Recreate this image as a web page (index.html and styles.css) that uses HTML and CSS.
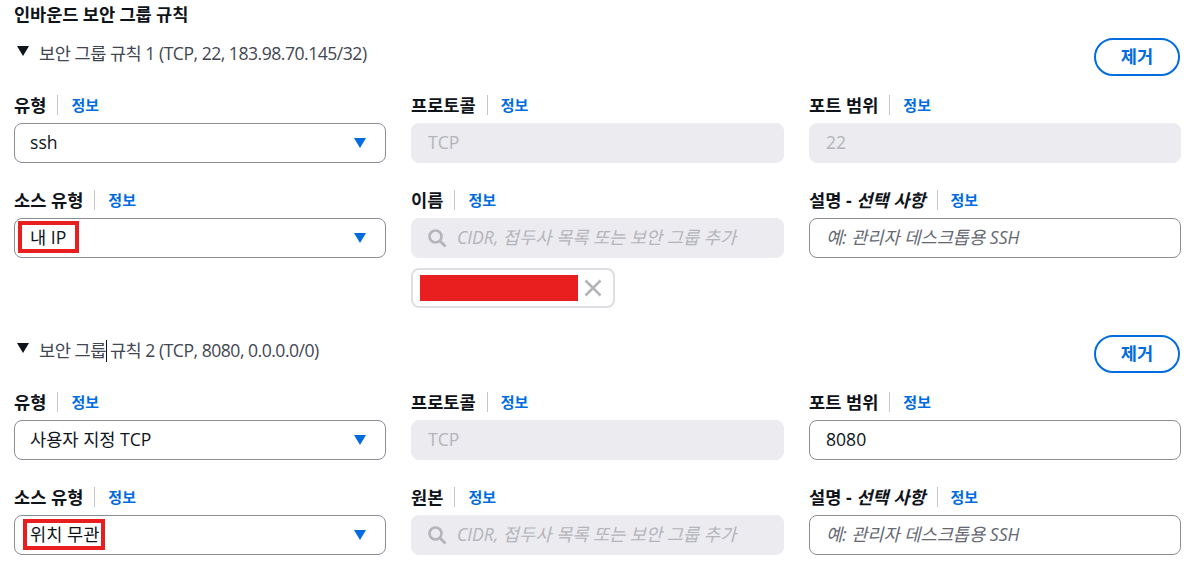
FILE: index.html
```html
<!DOCTYPE html>
<html lang="ko">
<head>
<meta charset="utf-8">
<title>인바운드 보안 그룹 규칙</title>
<link rel="stylesheet" href="styles.css">
</head>
<body>
<h2 class="title">인바운드 보안 그룹 규칙</h2>

<section class="rule rule-first">
  <div class="rule-head">
    <div class="rule-name"><span class="tri"></span><span>보안 그룹 규칙 1 (TCP, 22, 183.98.70.145/32)</span></div>
    <button class="remove">제거</button>
  </div>
  <div class="grid">
    <div class="field">
      <div class="label"><b>유형</b><a>정보</a></div>
      <div class="box select"><span>ssh</span><i class="arrow"></i></div>
    </div>
    <div class="field">
      <div class="label"><b>프로토콜</b><a>정보</a></div>
      <div class="box disabled"><span>TCP</span></div>
    </div>
    <div class="field">
      <div class="label"><b>포트 범위</b><a>정보</a></div>
      <div class="box disabled"><span>22</span></div>
    </div>
    <div class="field">
      <div class="label"><b>소스 유형</b><a>정보</a></div>
      <div class="box select"><span class="mark mark-ip">내 IP</span><i class="arrow"></i></div>
    </div>
    <div class="field">
      <div class="label"><b>이름</b><a>정보</a></div>
      <div class="box disabled search">
        <svg class="lens" viewBox="0 0 20 20" width="20" height="20"><circle cx="8.5" cy="8.5" r="6" fill="none" stroke="#b4b4bb" stroke-width="2.6"/><path d="M13 13l5.5 5.5" stroke="#b4b4bb" stroke-width="2.8" fill="none"/></svg>
        <em>CIDR, 접두사 목록 또는 보안 그룹 추가</em>
      </div>
      <div class="tag">
        <span class="redact"></span>
        <svg viewBox="0 0 18 18" width="18" height="18"><path d="M1.5 1.5l15 15M16.5 1.5l-15 15" stroke="#b4b4bb" stroke-width="2.6" fill="none"/></svg>
      </div>
    </div>
    <div class="field">
      <div class="label"><b>설명 - <em>선택 사항</em></b><a>정보</a></div>
      <div class="box"><em class="hint">예: 관리자 데스크톱용 SSH</em></div>
    </div>
  </div>
</section>

<section class="rule rule-second">
  <div class="rule-head">
    <div class="rule-name"><span class="tri"></span><span>보안 그룹<span class="caret"></span> 규칙 2 (TCP, 8080, 0.0.0.0/0)</span></div>
    <button class="remove">제거</button>
  </div>
  <div class="grid">
    <div class="field">
      <div class="label"><b>유형</b><a>정보</a></div>
      <div class="box select"><span>사용자 지정 TCP</span><i class="arrow"></i></div>
    </div>
    <div class="field">
      <div class="label"><b>프로토콜</b><a>정보</a></div>
      <div class="box disabled"><span>TCP</span></div>
    </div>
    <div class="field">
      <div class="label"><b>포트 범위</b><a>정보</a></div>
      <div class="box"><span>8080</span></div>
    </div>
    <div class="field">
      <div class="label"><b>소스 유형</b><a>정보</a></div>
      <div class="box select"><span class="mark mark-any">위치 무관</span><i class="arrow"></i></div>
    </div>
    <div class="field">
      <div class="label"><b>원본</b><a>정보</a></div>
      <div class="box disabled search">
        <svg class="lens" viewBox="0 0 20 20" width="20" height="20"><circle cx="8.5" cy="8.5" r="6" fill="none" stroke="#b4b4bb" stroke-width="2.6"/><path d="M13 13l5.5 5.5" stroke="#b4b4bb" stroke-width="2.8" fill="none"/></svg>
        <em>CIDR, 접두사 목록 또는 보안 그룹 추가</em>
      </div>
    </div>
    <div class="field">
      <div class="label"><b>설명 - <em>선택 사항</em></b><a>정보</a></div>
      <div class="box"><em class="hint">예: 관리자 데스크톱용 SSH</em></div>
    </div>
  </div>
</section>
</body>
</html>
```
FILE: styles.css
```css
* { box-sizing: border-box; }
html, body { margin: 0; height: 563px; overflow: hidden; }
body {
  background: #fff;
  color: #0f141a;
  font-family: "Open Sans", "Noto Sans CJK KR", sans-serif;
  font-size: 17.6px;
  line-height: 20px;
  padding: 4px 7px 0 14px;
}
.title { margin: 0; font-size: 17.6px; line-height: 20px; font-weight: 700; letter-spacing: -0.1px; }
.rule-first { margin-top: 14px; }
.rule-second { margin-top: 27px; }
.rule-head { display: flex; justify-content: space-between; align-items: flex-start; height: 57px; padding-right: 1px; }
.rule-name { display: flex; align-items: flex-start; gap: 10px; color: #424650; padding: 5px 0 0 3px; letter-spacing: -0.5px; }
.tri { width: 0; height: 0; margin-top: 3px; border-left: 6.5px solid transparent; border-right: 6.5px solid transparent; border-top: 10px solid #0f141a; }
.caret { display: inline-block; width: 1px; height: 22px; background: #0f141a; vertical-align: -5px; margin-right: -1px; }
.remove {
  width: 86px; height: 38px; padding: 0 0 2px;
  border: 2px solid #006ce0; border-radius: 20px; background: #fff;
  color: #006ce0; font: 700 17.6px/20px "Open Sans", "Noto Sans CJK KR", sans-serif;
}
.grid { display: grid; grid-template-columns: 372px 373px 372px; column-gap: 25px; row-gap: 27px; align-items: start; }
.label { display: flex; align-items: center; height: 20px; margin-bottom: 8px; }
.label b { font-weight: 700; padding-right: 11px; border-right: 1px solid #c6c6cd; height: 20px; white-space: nowrap; }
.label a { color: #006ce0; font-size: 15px; font-weight: 700; margin-left: 13px; }
.box {
  display: flex; align-items: center; height: 40px; padding: 0 16px 2px;
  border: 1px solid #8c8c94; border-radius: 8px; background: #fff;
}
.disabled { border-color: #ebebf0; background: #ebebf0; color: #b4b4bb; }
.select { justify-content: space-between; padding: 0 19px 2px 15px; }
.arrow { width: 0; height: 0; margin-top: 2px; border-left: 6.5px solid transparent; border-right: 6.5px solid transparent; border-top: 10px solid #006ce0; }
.mark { border: 4px solid #e91e1e; height: 32px; line-height: 24px; }
.mark-ip { margin-left: -12px; padding: 0 9px 0 8px; }
.mark-any { margin-left: -7px; padding: 0 2px 0 3px; height: 31px; line-height: 23px; }
.search { padding-left: 15px; gap: 10px; }
.search em { color: #b4b4bb; }
.lens { flex: none; margin-top: 2px; }
.hint { color: #656871; }
.tag {
  display: flex; align-items: center; gap: 6px; width: 204px; height: 40px; margin-top: 10px;
  padding: 0 10px 0 7px; border: 2px solid #dedee3; border-radius: 8px;
}
.redact { width: 158px; height: 26px; background: #e91e1e; }
```
